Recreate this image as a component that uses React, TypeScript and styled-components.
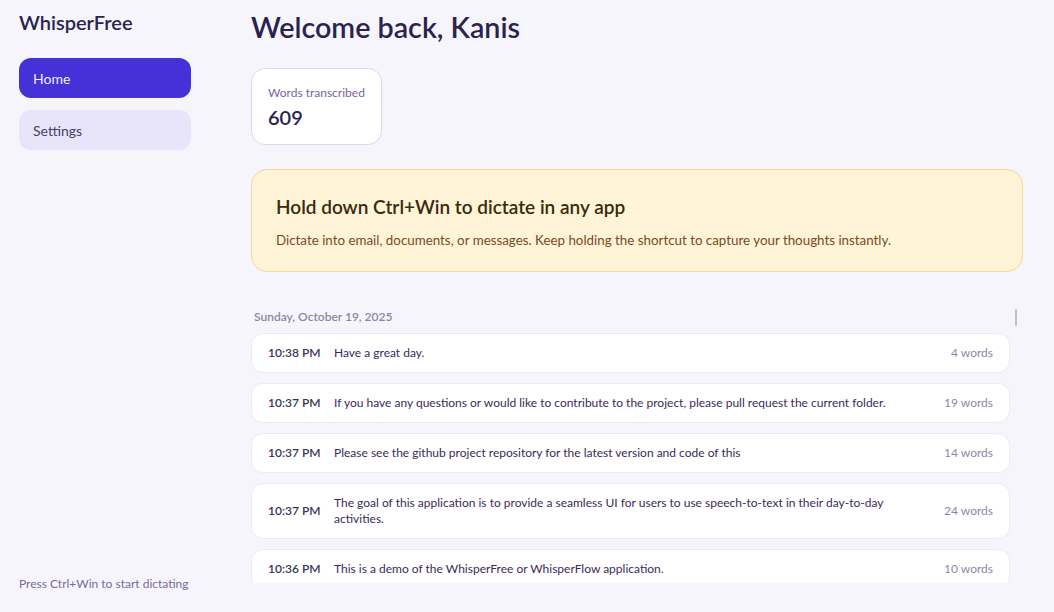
import React from "react";
import styled, { createGlobalStyle } from "styled-components";

const GlobalStyle = createGlobalStyle`
  html, body { margin: 0; padding: 0; height: 100%; }
  body {
    background: #f6f5fb;
    font-family: Lato, "Noto Sans", sans-serif;
    color: #2a2350;
  }
  #root { height: 100%; }
`;

const Shell = styled.div`
  display: flex;
  width: 1054px;
  height: 612px;
  overflow: hidden;
  background: #f6f5fb;
`;

const Sidebar = styled.aside`
  width: 172px;
  flex: none;
  padding: 9px 19px 21px 19px;
  display: flex;
  flex-direction: column;
`;

const Brand = styled.div`
  font-size: 20px;
  font-weight: 600;
  color: #2a2350;
  line-height: 26px;
  margin-bottom: 23px;
`;

const NavList = styled.nav`
  display: flex;
  flex-direction: column;
  gap: 12px;
`;

const NavItem = styled.div<{ $active?: boolean }>`
  height: 40px;
  border-radius: 12px;
  display: flex;
  align-items: center;
  padding: 0 14px;
  font-size: 14px;
  background: ${(p) => (p.$active ? "#4431d8" : "#e8e4fa")};
  color: ${(p) => (p.$active ? "#f1eeff" : "#4a3f6b")};
`;

const SideFooter = styled.div`
  margin-top: auto;
  font-size: 12px;
  color: #7a6a9a;
`;

const Main = styled.main`
  flex: 1;
  padding: 10px 31px 29px 41px;
  display: flex;
  flex-direction: column;
  min-width: 0;
`;

const Title = styled.h1`
  margin: 0;
  font-size: 28.7px;
  font-weight: 600;
  line-height: 34px;
  color: #2a2350;
`;

const StatCard = styled.div`
  margin-top: 24px;
  align-self: flex-start;
  min-width: 96px;
  height: 75px;
  border: 1px solid #dcd6f7;
  border-radius: 14px;
  background: #ffffff;
  padding: 0 16px;
  display: flex;
  flex-direction: column;
  justify-content: center;
`;

const StatLabel = styled.div`
  font-size: 12px;
  color: #7a5fa5;
  line-height: 16px;
  white-space: nowrap;
  margin-top: 1px;
`;

const StatValue = styled.div`
  font-size: 20px;
  font-weight: 600;
  color: #2a2350;
  line-height: 26px;
  margin-top: 3px;
`;

const Banner = styled.section`
  margin-top: 24px;
  border: 1px solid #f4da96;
  background: #fff4d8;
  border-radius: 16px;
  padding: 25px 24px 22px 24px;
`;

const BannerTitle = styled.h2`
  margin: 0;
  font-size: 19px;
  font-weight: 600;
  line-height: 24px;
  color: #3a2a0e;
`;

const BannerText = styled.p`
  margin: 12px 0 0 0;
  font-size: 13.35px;
  line-height: 18px;
  color: #7a4a1e;
`;

const HistoryWrap = styled.div`
  position: relative;
  margin-top: 29px;
  flex: 1;
  min-height: 0;
`;

const History = styled.div`
  height: 100%;
  overflow: hidden;
  padding-right: 13px;
`;

const Thumb = styled.div`
  position: absolute;
  right: 6px;
  top: 8px;
  width: 2px;
  height: 17px;
  border-radius: 1px;
  background: #c2bfcc;
`;

const DateHeading = styled.div`
  font-size: 12px;
  font-weight: 600;
  color: #8d87a8;
  line-height: 16px;
  padding: 8px 3px 8px 3px;
`;

const Rows = styled.div`
  display: flex;
  flex-direction: column;
  gap: 10px;
`;

const Row = styled.div`
  display: flex;
  align-items: center;
  background: #ffffff;
  border: 1px solid #ece9fa;
  border-radius: 12px;
  padding: 11px 16px;
  gap: 16px;
`;

const Time = styled.div`
  flex: none;
  width: 50px;
  font-size: 12px;
  font-weight: 600;
  color: #3a3555;
  line-height: 16px;
  white-space: nowrap;
`;

const RowText = styled.div`
  flex: 1;
  font-size: 12px;
  color: #3b2a5a;
  line-height: 16px;
  padding-right: 20px;
`;

const Count = styled.div`
  flex: none;
  font-size: 12px;
  color: #8d87a8;
  line-height: 16px;
  white-space: nowrap;
`;

const entries = [
  { time: "10:38 PM", text: "Have a great day.", words: 4 },
  {
    time: "10:37 PM",
    text: "If you have any questions or would like to contribute to the project, please pull request the current folder.",
    words: 19,
  },
  {
    time: "10:37 PM",
    text: "Please see the github project repository for the latest version and code of this",
    words: 14,
  },
  {
    time: "10:37 PM",
    text: "The goal of this application is to provide a seamless UI for users to use speech-to-text in their day-to-day activities.",
    words: 24,
  },
  {
    time: "10:36 PM",
    text: "This is a demo of the WhisperFree or WhisperFlow application.",
    words: 10,
  },
];

export default function App() {
  return (
    <>
      <GlobalStyle />
      <Shell>
        <Sidebar>
          <Brand>WhisperFree</Brand>
          <NavList>
            <NavItem $active>Home</NavItem>
            <NavItem>Settings</NavItem>
          </NavList>
          <SideFooter>Press Ctrl+Win to start dictating</SideFooter>
        </Sidebar>
        <Main>
          <Title>Welcome back, Kanis</Title>
          <StatCard>
            <StatLabel>Words transcribed</StatLabel>
            <StatValue>609</StatValue>
          </StatCard>
          <Banner>
            <BannerTitle>Hold down Ctrl+Win to dictate in any app</BannerTitle>
            <BannerText>
              Dictate into email, documents, or messages. Keep holding the shortcut to capture your thoughts instantly.
            </BannerText>
          </Banner>
          <HistoryWrap>
            <History>
              <DateHeading>Sunday, October 19, 2025</DateHeading>
              <Rows>
                {entries.map((e, i) => (
                  <Row key={i}>
                    <Time>{e.time}</Time>
                    <RowText>{e.text}</RowText>
                    <Count>{e.words} words</Count>
                  </Row>
                ))}
              </Rows>
            </History>
            <Thumb />
          </HistoryWrap>
        </Main>
      </Shell>
    </>
  );
}
